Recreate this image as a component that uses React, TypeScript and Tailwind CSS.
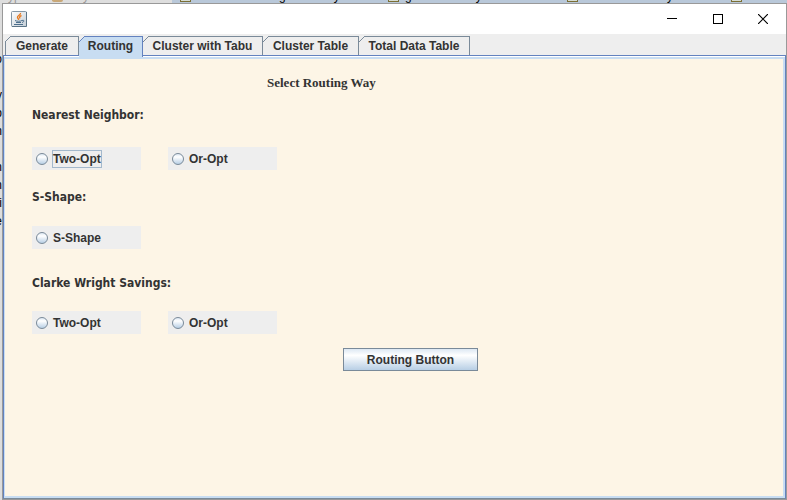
import React from "react";

const JavaIcon = () => (
  <svg width="16" height="16" viewBox="0 0 16 16" className="block" aria-hidden="true">
    <defs>
      <linearGradient id="java-bg" x1="0" y1="0" x2="1" y2="1">
        <stop offset="0" stopColor="#ffffff" />
        <stop offset="1" stopColor="#c3cdd6" />
      </linearGradient>
    </defs>
    <rect x="0.5" y="0.5" width="15" height="15" rx="1" fill="url(#java-bg)" stroke="#8497a6" />
    <path d="M1 15.500H15.500V1" fill="none" stroke="#5b7487" />
    <path d="M9.500 2C10 4 6 4.500 6.500 6.500C6.700 7.500 8 8 7.500 9M10.500 4.500C8 5.500 8.500 6.500 9 7.500" fill="none" stroke="#e8791e" strokeWidth="1.400" />
    <path d="M4 9.500C6 10.500 9 10.500 11 9.500M5 11.500H10M3 13.500H12M11 9.500C13.500 8.500 13.500 11 11 11.500" fill="none" stroke="#4d6f8c" />
  </svg>
);

const tabs = [
  { name: "Generate", width: "w-[74px]" },
  { name: "Routing", width: "w-16" },
  { name: "Cluster with Tabu", width: "w-[120px]" },
  { name: "Cluster Table", width: "w-24" },
  { name: "Total Data Table", width: "w-[111px]" },
];

function Tab({ name, width, active, first }: { name: string; width: string; active: boolean; first: boolean }) {
  return (
    <button
      role="tab"
      aria-selected={active}
      className={`relative shrink-0 border-t border-r text-center text-xs leading-[18px] font-bold whitespace-nowrap ${width} ${
        active ? "h-[21px] border-[#6382bf] bg-[#c8ddf2] pb-0.5" : "h-[19px] border-[#7a8a99] bg-[#eeeeee]"
      } ${first ? "border-l" : ""}`}
    >
      {name}
      <svg width="7" height="7" className={`absolute -top-px ${first ? "-left-px" : "left-0"}`} aria-hidden="true">
        <path d="M0 0H6L0 6Z" fill="#eeeeee" />
        <path d="M0 6L6 0" stroke={active ? "#6382bf" : "#7a8a99"} />
      </svg>
    </button>
  );
}

function Radio({ label, group, focused = false }: { label: string; group: string; focused?: boolean }) {
  return (
    <label className="flex h-[23px] w-[109px] items-center gap-1 bg-[#eeeeee] pl-1 text-xs font-bold">
      <input
        type="radio"
        name={group}
        className="size-3 appearance-none rounded-full border border-[#7a8a99] bg-linear-to-b from-[#dde8f3] via-white via-30% to-[#b8cfe5] checked:bg-[#333333]"
      />
      <span className={`border leading-4 ${focused ? "border-[#a3b8cc]" : "border-transparent"}`}>{label}</span>
    </label>
  );
}

const heading = "font-['DejaVu_Sans_Condensed','Noto_Sans',sans-serif] text-xs leading-4 font-bold";

const leftText = [
  { text: "o", style: "pt-12" },
  { text: "y", style: "pt-5" },
  { text: "p", style: "pt-0.5" },
  { text: "m", style: "pt-0.5" },
  { text: "n", style: "pt-5" },
  { text: "h", style: "pt-0.5" },
  { text: "i", style: "pt-0.5" },
  { text: "e", style: "pt-0.5" },
];

const editorTabs = [
  { first: "g", second: "y", width: "w-52", gap: "w-[88px]", inner: "w-12" },
  { first: "g", second: "y", width: "w-[179px]", gap: "w-[6px]", inner: "w-[64px]" },
  { first: "", second: "y", width: "w-[164px]", gap: "w-[70px]", inner: "w-[19px]" },
  { first: "", second: "", width: "w-14", gap: "w-0", inner: "w-0" },
];

export default function App() {
  return (
    <div className="flex h-screen flex-col overflow-hidden bg-[#dddddd] font-['Liberation_Sans',Arial,sans-serif] text-[#333333]">
      <div className="flex h-[3px] shrink-0 overflow-hidden text-xs leading-4" aria-hidden="true">
        <div className="flex w-[172px] shrink-0 bg-[#dedede] pl-2 text-[#999999]">
          <span className="-mt-3 w-11">yp</span>
          <span className="h-0.5 w-[11px] rounded-b-sm border border-[#c9a878] bg-[#ecd0a4]" />
          <span className="-mt-3 ml-5">y</span>
        </div>
        <div className="flex grow bg-[#b9c8d9] pl-2 text-black">
          {editorTabs.map((tab, i) => (
            <div key={i} className={`flex shrink-0 ${tab.width}`}>
              <span className="h-0.5 w-[11px] border border-t-0 border-[#7b6f35] bg-[#d5dbd2]" />
              <span className={tab.gap} />
              <span className="-mt-3">{tab.first}</span>
              <span className={tab.inner} />
              <span className="-mt-3">{tab.second}</span>
            </div>
          ))}
        </div>
      </div>
      <div className="flex min-h-0 grow">
        <div className="w-0.5 shrink-0 overflow-hidden text-xs leading-4 text-black" aria-hidden="true">
          {leftText.map((row) => (
            <div key={row.text} className={`flex justify-end ${row.style}`}>{row.text}</div>
          ))}
        </div>
        <main className="flex min-w-0 grow flex-col border border-[#999999] bg-[#eeeeee]">
          <header className="flex h-[30px] shrink-0 items-center bg-white pl-2">
            <JavaIcon />
            <div className="ml-auto flex">
              <button aria-label="Minimize" className="flex h-7 w-[46px] items-center justify-center">
                <svg width="10" height="10"><path d="M0 4.500H10" stroke="#000" /></svg>
              </button>
              <button aria-label="Maximize" className="flex h-7 w-[45px] items-center justify-center">
                <svg width="10" height="10"><rect x="0.5" y="0.5" width="9" height="9" fill="none" stroke="#000" /></svg>
              </button>
              <button aria-label="Close" className="flex h-7 w-[46px] items-center justify-center">
                <svg width="10" height="10"><path d="M0 0L10 10M10 0L0 10" stroke="#000" strokeWidth="1.200" /></svg>
              </button>
            </div>
          </header>
          <nav role="tablist" className="flex h-[21px] shrink-0 items-start pt-0.5 pl-0.5">
            {tabs.map((tab, i) => (
              <Tab key={tab.name} {...tab} active={i === 1} first={i === 0} />
            ))}
          </nav>
          <section className="flex min-h-0 grow border border-[#6382bf] border-b-[#7a8a99] bg-white pt-px">
            <div className="grow border-t-2 border-r-2 border-b-2 border-l border-[#c8ddf2] bg-[#fdf5e6] pl-[27px]">
              <h1 className="mt-4 pl-[235px] font-['Liberation_Serif',serif] text-[13px] leading-4 font-bold">Select Routing Way</h1>
              <h2 className={`mt-4 ${heading}`}>Nearest Neighbor:</h2>
              <div className="mt-6 flex gap-[27px]">
                <Radio label="Two-Opt" group="nearest" focused />
                <Radio label="Or-Opt" group="nearest" />
              </div>
              <h2 className={`mt-[19px] ${heading}`}>S-Shape:</h2>
              <div className="mt-[21px] flex">
                <Radio label="S-Shape" group="shape" />
              </div>
              <h2 className={`mt-[26px] ${heading}`}>Clarke Wright Savings:</h2>
              <div className="mt-5 flex gap-[27px]">
                <Radio label="Two-Opt" group="savings" />
                <Radio label="Or-Opt" group="savings" />
              </div>
              <button className="mt-3.5 ml-[311px] block h-[23px] w-[135px] border border-[#7a8a99] bg-linear-to-b from-[#dde8f3] via-white via-30% to-[#b8cfe5] text-xs font-bold">
                Routing Button
              </button>
            </div>
          </section>
        </main>
      </div>
    </div>
  );
}
